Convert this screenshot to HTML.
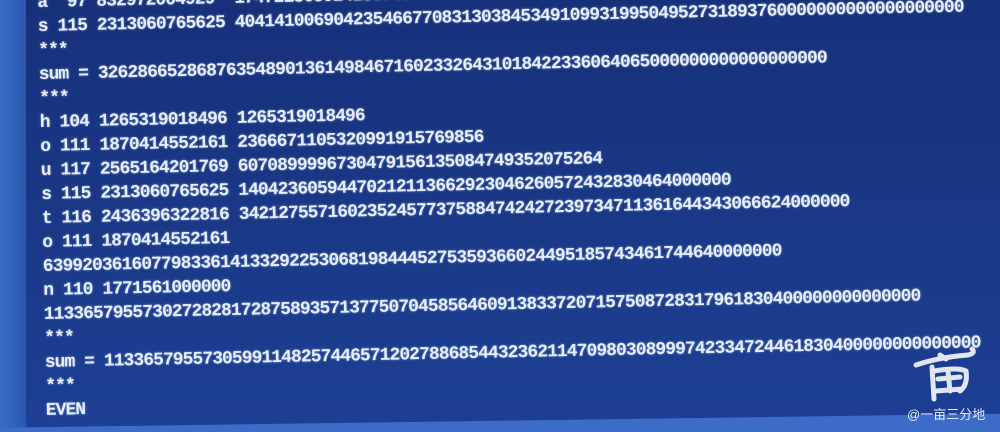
<!DOCTYPE html>
<html><head><meta charset="utf-8"><style>
html,body{margin:0;padding:0;overflow:hidden;width:1000px;height:432px}
body{position:relative;}
.wrap{position:absolute;left:0;top:0;width:1000px;height:432px;overflow:hidden;
background:linear-gradient(180deg,#17307a 0%,#1a3886 50%,#1d3f95 100%);}
.left{position:absolute;left:0;top:0;width:26px;height:432px;background:linear-gradient(90deg,#3a6cc4,#2a58b0);}
.bot{position:absolute;left:-20px;top:428px;width:1100px;height:30px;background:#3c6cc8;transform:rotate(-0.8deg);transform-origin:0 0;}
.txt{position:absolute;left:37px;top:-9px;transform:rotate(-1.2deg);transform-origin:0 0;
font-family:"Liberation Mono",monospace;font-weight:bold;font-size:18px;letter-spacing:-0.95px;color:#e6eefc;
text-shadow:0 0 2px rgba(200,220,255,.6);line-height:24px;white-space:pre;}
.wm{position:absolute;left:907px;top:404px;font-family:"Liberation Sans","Noto Sans CJK SC",sans-serif;font-size:13px;color:#e8ecf4;}
</style></head><body>
<div class="wrap">
<div class="left"></div>
<div class="bot"></div>
<div class="txt">a  97 832972004929  17472136592418576548000000000000000000000000
s 115 2313060765625 40414100690423546677083130384534910993199504952731893760000000000000000000
***
sum = 32628665286876354890136149846716023326431018422336064065000000000000000000
***
h 104 1265319018496 1265319018496
o 111 1870414552161 2366671105320991915769856
u 117 2565164201769 6070899996730479156135084749352075264
s 115 2313060765625 14042360594470212113662923046260572432830464000000
t 116 2436396322816 34212755716023524577375884742427239734711361644343066624000000
o 111 1870414552161
639920361607798336141332922530681984445275359366024495185743461744640000000
n 110 1771561000000
11336579557302728281728758935713775070458564609138337207157508728317961830400000000000000
***
sum = 11336579557305991148257446571202788685443236211470980308999742334724461830400000000000000
***
EVEN</div>
<svg style="position:absolute;left:910px;top:345px" width="80" height="60" viewBox="0 0 80 60">
<g fill="none" stroke="#e2e6f0" stroke-width="5" stroke-linecap="round">
<path d="M6 20 Q30 12 58 10 Q66 8 62 4"/>
<path d="M30 10 L36 14"/>
<path d="M22 22 L24 54"/>
<path d="M24 26 Q48 22 56 26 Q58 40 50 46"/>
<path d="M28 34 L50 32"/>
<path d="M38 26 L40 46"/>
<path d="M26 46 L52 44"/>
</g></svg>
<div class="wm">@一亩三分地</div>
</div>
</body></html>
